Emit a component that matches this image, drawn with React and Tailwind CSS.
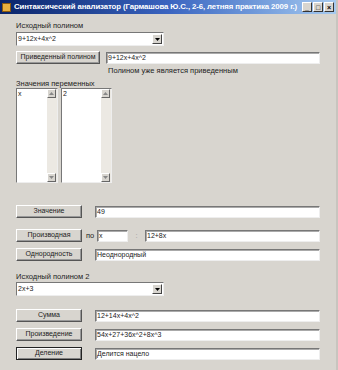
import React from 'react';

const font = { fontFamily: '"Liberation Sans", Arial, sans-serif' };

const Btn = ({ children, w = 'w-[66px]', focused }) => (
  <div
    className={`${w} h-[13px] flex items-center justify-center bg-[#d8d5cf] text-[7px] text-[#222] border ${
      focused
        ? 'border-[#222] shadow-[inset_1px_1px_0_#fff,inset_-1px_-1px_0_#808080]'
        : 'border-t-white border-l-white border-r-[#555] border-b-[#555] shadow-[inset_-1px_-1px_0_#999]'
    }`}
  >
    {children}
  </div>
);

const Box = ({ children, w = 'flex-1', h = 'h-[12px]' }) => (
  <div
    className={`${w} ${h} bg-white border border-t-[#777] border-l-[#777] border-r-[#eee] border-b-[#eee] shadow-[inset_1px_1px_0_#aaa] text-[7px] text-[#222] leading-[10px] pl-[1px] truncate`}
  >
    {children}
  </div>
);

const Arrow = ({ up }) => (
  <div className="w-[9px] h-[9px] bg-[#d8d5cf] border border-t-white border-l-white border-r-[#666] border-b-[#666] flex items-center justify-center">
    <svg width="5" height="3" viewBox="0 0 5 3">
      <path d={up ? 'M0 3 L2.5 0 L5 3 Z' : 'M0 0 L5 0 L2.5 3 Z'} fill="#888" />
    </svg>
  </div>
);

const Combo = ({ value }) => (
  <div className="w-[148px] h-[14px] bg-white border border-t-[#777] border-l-[#777] border-r-[#eee] border-b-[#eee] flex items-center">
    <span className="flex-1 text-[7px] text-[#222] pl-[1px]">{value}</span>
    <div className="w-[10px] h-[10px] mr-[1px] bg-[#d8d5cf] border border-t-white border-l-white border-r-[#444] border-b-[#444] flex items-center justify-center">
      <svg width="5" height="3" viewBox="0 0 5 3">
        <path d="M0 0 L5 0 L2.5 3 Z" fill="#000" />
      </svg>
    </div>
  </div>
);

const ListBox = ({ w, item }) => (
  <div className={`${w} h-[95px] bg-white border border-t-[#777] border-l-[#777] border-r-[#eee] border-b-[#eee] flex`}>
    <div className="flex-1 text-[7px] text-[#222] pl-[1px] leading-[9px]">{item}</div>
    <div className="w-[10px] bg-[#ece9e3] flex flex-col justify-between">
      <Arrow up />
      <Arrow />
    </div>
  </div>
);

const CtrlBtn = ({ children }) => (
  <div className="w-[10px] h-[10px] bg-[#d8d5cf] border border-t-white border-l-white border-r-[#333] border-b-[#333] flex items-center justify-center text-[7px] leading-none font-bold text-black">
    {children}
  </div>
);

export default function App() {
  return (
    <div className="w-[338px] h-[370px] bg-[#d8d5cf] overflow-hidden border-r-[2px] border-r-[#c8c5bf]" style={font}>
      {/* title bar */}
      <div className="h-[14px] flex items-center bg-gradient-to-r from-[#0a246a] via-[#3a64c0] to-[#a6caf0] px-[2px]">
        <div className="w-[9px] h-[9px] bg-[#e8b040] border border-[#8a5a10] mr-[3px] flex-none" />
        <span className="text-[7.8px] font-bold text-white whitespace-nowrap flex-1 tracking-[-0.1px]">
          Синтаксический анализатор (Гармашова Ю.С., 2-6, летняя практика 2009 г.)
        </span>
        <div className="flex gap-[1px] ml-[3px]">
          <CtrlBtn>_</CtrlBtn>
          <CtrlBtn>□</CtrlBtn>
          <CtrlBtn>×</CtrlBtn>
        </div>
      </div>

      <div className="pl-[16px] pr-[16px] text-[7.5px] text-[#222]">
        <div className="mt-[7px] h-[10px] leading-[10px]">Исходный полином</div>
        <div className="mt-[1px]">
          <Combo value="9+12x+4x^2" />
        </div>

        <div className="mt-[5px] flex items-center gap-[6px]">
          <Btn w="w-[84px]">Приведенный полином</Btn>
          <Box>9+12x+4x^2</Box>
        </div>
        <div className="pl-[92px] mt-[2px] h-[10px] leading-[10px]">Полином уже является приведенным</div>

        <div className="mt-[3px] h-[9px] leading-[9px]">Значения переменных</div>
        <div className="flex gap-[3px]">
          <ListBox w="w-[42px]" item="x" />
          <ListBox w="w-[51px]" item="2" />
        </div>

        <div className="mt-[22px] flex items-center gap-[13px]">
          <Btn>Значение</Btn>
          <Box>49</Box>
        </div>

        <div className="mt-[11px] flex items-center">
          <Btn>Производная</Btn>
          <span className="ml-[4px] w-[11px] whitespace-nowrap">по</span>
          <Box w="w-[31px]">x</Box>
          <span className="w-[17px] text-center text-[#999]">:</span>
          <Box>12+8x</Box>
        </div>

        <div className="mt-[6px] flex items-center gap-[13px]">
          <Btn>Однородность</Btn>
          <Box>Неоднородный</Box>
        </div>

        <div className="mt-[11px] h-[9px] leading-[9px]">Исходный полином 2</div>
        <div className="mt-[1px]">
          <Combo value="2x+3" />
        </div>

        <div className="mt-[13px] flex items-center gap-[13px]">
          <Btn>Сумма</Btn>
          <Box>12+14x+4x^2</Box>
        </div>
        <div className="mt-[6px] flex items-center gap-[13px]">
          <Btn>Произведение</Btn>
          <Box>54x+27+36x^2+8x^3</Box>
        </div>
        <div className="mt-[6px] flex items-center gap-[13px]">
          <Btn focused>Деление</Btn>
          <Box>Делится нацело</Box>
        </div>
      </div>
    </div>
  );
}
